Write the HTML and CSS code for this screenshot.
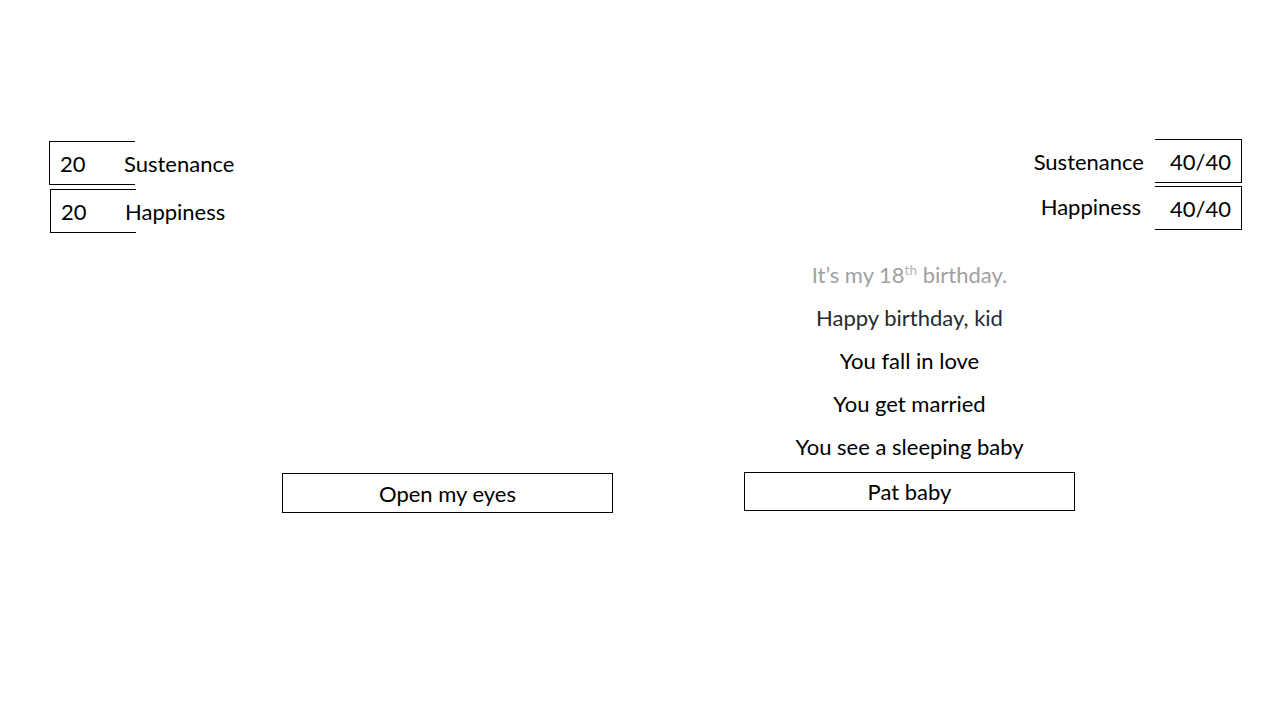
FILE: index.html
```html
<!DOCTYPE html>
<html lang="en">
<head>
<meta charset="utf-8">
<title>Life</title>
<link rel="stylesheet" href="styles.css">
</head>
<body>
<main class="screen">
  <section class="stats">
    <div class="stat-list stat-list--left">
      <div class="stat stat--left">
        <span class="stat-box stat-box--left">20</span>
        <span class="stat-label stat-label--left">Sustenance</span>
      </div>
      <div class="stat stat--left stat--second">
        <span class="stat-box stat-box--left">20</span>
        <span class="stat-label stat-label--left">Happiness</span>
      </div>
    </div>
    <div class="stat-list stat-list--right">
      <div class="stat stat--right">
        <span class="stat-label stat-label--right">Sustenance</span>
        <span class="stat-box stat-box--right">40/40</span>
      </div>
      <div class="stat stat--right stat--second-right">
        <span class="stat-label stat-label--right">Happiness</span>
        <span class="stat-box stat-box--right">40/40</span>
      </div>
    </div>
  </section>
  <section class="stage">
    <div class="col col--left">
      <button class="action action--left" type="button">Open my eyes</button>
    </div>
    <div class="col col--right">
      <p class="line line--faded">It’s my 18<sup class="ord">th</sup> birthday.</p>
      <p class="line line--dim">Happy birthday, kid</p>
      <p class="line">You fall in love</p>
      <p class="line">You get married</p>
      <p class="line">You see a sleeping baby</p>
      <button class="action action--right" type="button">Pat baby</button>
    </div>
  </section>
</main>
</body>
</html>
```
FILE: styles.css
```css
* { box-sizing: border-box; }
html, body { margin: 0; padding: 0; background: #ffffff; }
body {
  font-family: "Lato", "Liberation Sans", sans-serif;
  font-size: 22px;
  color: #000000;
}
.screen {
  width: 1280px;
  height: 720px;
  padding-top: 139px;
}
.stats {
  display: flex;
  justify-content: space-between;
  align-items: flex-start;
  padding: 0 38px 0 49px;
}
.stat-list { display: flex; flex-direction: column; }
.stat-list--left { padding-top: 2px; }
.stat { display: flex; align-items: center; height: 44px; }
.stat--second { margin-top: 4px; margin-left: 1px; }
.stat--second-right { margin-top: 3px; }
.stat-list--right { align-items: flex-end; }
.stat-box {
  display: flex;
  align-items: center;
  height: 44px;
  width: 86px;
  border-top: 1px solid #000;
  border-bottom: 1px solid #000;
}
.stat-box--left {
  border-left: 1px solid #000;
  padding-left: 10px;
}
.stat-box--right {
  width: 87px;
  border-right: 1px solid #000;
  justify-content: flex-end;
  padding-right: 10px;
}
.stat-label--left { margin-left: -11px; background: #fff; padding-right: 4px; }
.stat-label--right { margin-right: 11px; }
.stat--second-right .stat-label--right { margin-right: 14px; margin-top: -4px; }

.stage {
  display: flex;
  align-items: flex-end;
  gap: 131px;
  padding-left: 282px;
  margin-top: 20px;
}
.col { width: 331px; display: flex; flex-direction: column; align-items: center; }
.line {
  margin: 0;
  height: 43px;
  line-height: 43px;
  text-align: center;
  white-space: nowrap;
}
.line--faded { color: #a0a0a0; }
.line--dim { color: #262a30; }
.ord {
  font-size: 0.62em;
  color: #b4b4b4;
  vertical-align: 0.6em;
  line-height: 0;
}
.action {
  width: 331px;
  font-family: inherit;
  font-size: 22px;
  color: #000;
  background: #fff;
  border: 1px solid #000;
  border-radius: 0;
  padding: 0;
  margin: 0;
}
.action--left { height: 40px; }
.action--right { height: 39px; margin-top: 4px; margin-bottom: 2px; }
```
